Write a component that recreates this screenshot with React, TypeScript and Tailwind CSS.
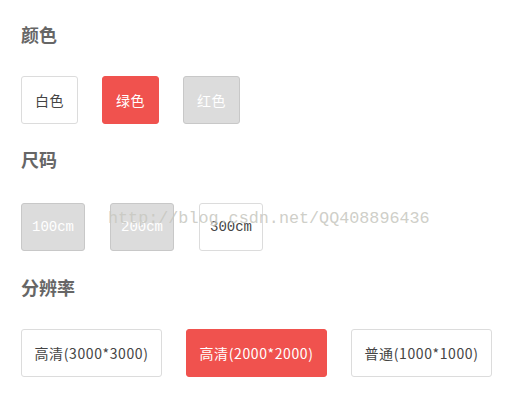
const colors = [
  { label: "白色", state: "normal" },
  { label: "绿色", state: "active" },
  { label: "红色", state: "disabled" },
]

const sizes = [
  { label: "100cm", state: "disabled" },
  { label: "200cm", state: "disabled" },
  { label: "300cm", state: "normal" },
]

const resolutions = [
  { label: "高清(3000*3000)", state: "normal" },
  { label: "高清(2000*2000)", state: "active" },
  { label: "普通(1000*1000)", state: "normal" },
]

const stateClass: Record<string, string> = {
  normal: "border-[#dcdcdc] bg-white text-[#444]",
  active: "border-[#f0524e] bg-[#f0524e] text-white",
  disabled: "border-[#c8c8c8] bg-[#dcdcdc] text-white",
}

type Opt = { label: string; state: string }

const fonts = {
  mono: '"Liberation Mono", "DejaVu Sans Mono", monospace',
  sans: '"Noto Sans CJK SC", sans-serif',
}

const Option = ({ opt, width, mono }: { opt: Opt; width: string; mono?: boolean }) => (
  <button
    className={`flex h-[48px] ${width} items-center justify-center rounded-[3px] border text-[14px] ${mono ? "" : "tracking-[0.6px]"} ${stateClass[opt.state]}`}
    style={{ fontFamily: mono ? fonts.mono : fonts.sans }}
  >
    {opt.label}
  </button>
)

const Heading = ({ children }: { children: string }) => (
  <h2
    className="h-6 text-[18px] leading-6 font-bold text-[#666]"
    style={{ fontFamily: fonts.sans }}
  >
    {children}
  </h2>
)

export default function App() {
  return (
    <div className="relative h-[420px] w-[520px] overflow-hidden bg-white pl-[21px] pt-[22px]">
      <Heading>颜色</Heading>
      <div className="mt-[30px] flex gap-[24px]">
        {colors.map((c) => (
          <Option key={c.label} opt={c} width="w-[57px]" />
        ))}
      </div>

      <div className="mt-[23px]">
        <Heading>尺码</Heading>
      </div>
      <div className="mt-[32px] flex gap-[25px]">
        {sizes.map((s) => (
          <Option key={s.label} opt={s} width="w-[64px]" mono />
        ))}
      </div>

      <div className="mt-[24px]">
        <Heading>分辨率</Heading>
      </div>
      <div className="mt-[30px] flex gap-[24px]">
        {resolutions.map((r) => (
          <Option key={r.label} opt={r} width="w-[141px]" />
        ))}
      </div>

      {/* blog watermark */}
      <div
        className="pointer-events-none absolute top-[209px] left-[108px] text-[16.75px] leading-5 text-[#c9c9c2]/90"
        style={{ fontFamily: fonts.mono }}
      >
        http://blog.csdn.net/QQ408896436
      </div>
    </div>
  )
}
